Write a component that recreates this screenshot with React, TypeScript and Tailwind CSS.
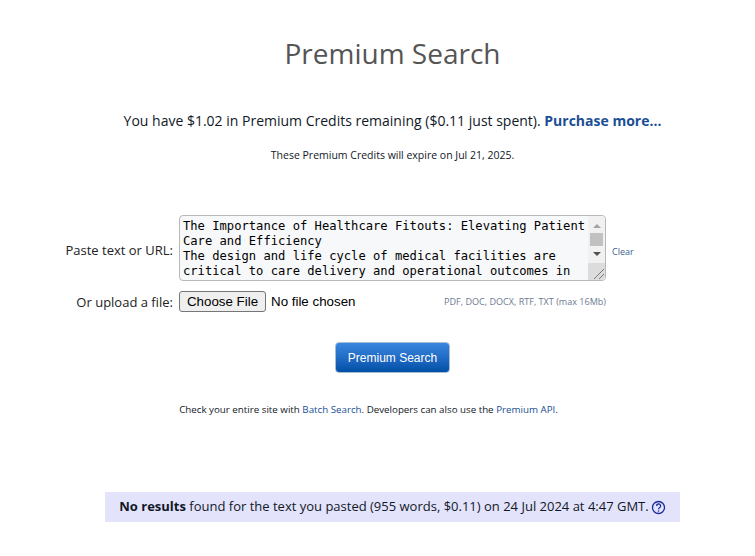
const text = `The Importance of Healthcare Fitouts: Elevating Patient Care and Efficiency
The design and life cycle of medical facilities are critical to care delivery and operational outcomes in modern healthcare settings. Well planned fitouts support patients, clinicians and administrators alike.`;

export default function App() {
  return (
    <div className="w-[755px] h-[556px] bg-white overflow-hidden font-['Open_Sans',sans-serif] text-[#111827]">
      <div className="ml-[105px] w-[575px] flex flex-col items-center">
        <h1 className="mt-[34px] h-[38px] text-[28px] leading-[38px] text-[#555555]">Premium Search</h1>
        <p className="mt-[39px] h-[20px] text-[14px] leading-[20px] whitespace-nowrap">
          You have $1.02 in Premium Credits remaining ($0.11 just spent).{" "}
          <a className="font-bold text-[#1a4f95]">Purchase more...</a>
        </p>
        <p className="mt-[16px] h-[16px] text-[10.5px] leading-[16px]">These Premium Credits will expire on Jul 21, 2025.</p>
      </div>

      <div className="mt-[52px] flex items-center">
        <label className="w-[173px] pt-[4px] text-right text-[13px] leading-[18px] text-[#222222]">Paste text or URL:</label>
        <div className="relative ml-[6px] w-[427px] h-[66px]">
          <textarea
            readOnly
            defaultValue={text}
            className="w-full h-full block border border-[#b8b8b8] rounded-[4px] bg-[#f7f8fa] pl-[3px] pr-[18px] py-[3px] overflow-hidden resize-none outline-none font-['DejaVu_Sans_Mono',monospace] text-[12.15px] leading-[15px] text-black"
          />
          <div className="absolute right-[1px] top-[1px] bottom-[1px] w-[17px] bg-[#f1f1f1] flex flex-col items-center rounded-r-[3px] overflow-hidden">
            <svg className="mt-[8px]" width="8" height="4" viewBox="0 0 8 4"><path d="M4 0 L8 4 H0 Z" fill="#a3a3a3" /></svg>
            <div className="mt-[5px] w-[13px] h-[13px] bg-[#c1c1c1]" />
            <svg className="mt-[6px]" width="8" height="4" viewBox="0 0 8 4"><path d="M0 0 H8 L4 4 Z" fill="#505050" /></svg>
            <div className="mt-auto w-[17px] h-[17px] bg-[#dcdcdc] flex items-end justify-end">
              <svg width="12" height="12" viewBox="0 0 12 12" stroke="#777777" strokeWidth="1"><path d="M1 11 L11 1 M6 11 L11 6" /></svg>
            </div>
          </div>
        </div>
        <a className="ml-[6px] pt-[8px] text-[9px] leading-[12px] text-[#3b5f8f]">Clear</a>
      </div>

      <div className="mt-[8px] flex items-center h-[24px]">
        <label className="w-[173px] pt-[2px] text-right text-[13px] leading-[18px] text-[#222222]">Or upload a file:</label>
        <input
          type="file"
          className="ml-[6px] w-[240px] font-['Liberation_Sans',sans-serif] text-[13.33px] text-black file:mr-[5px] file:h-[21px] file:w-[87px] file:rounded-[3px] file:border file:border-[#767676] file:bg-[#efefef] file:text-[13.33px] file:text-black"
        />
        <span className="w-[187px] pt-[2px] text-right text-[9.05px] leading-[12px] text-[#6b7a90]">PDF, DOC, DOCX, RTF, TXT (max 16Mb)</span>
      </div>

      <div className="ml-[105px] w-[575px] flex flex-col items-center">
        <button className="mt-[29px] w-[115px] h-[31px] rounded-[4px] border border-[#a8bcd4] bg-gradient-to-b from-[#3a87e0] to-[#0050a8] font-['Liberation_Sans',sans-serif] text-[12px] text-white">
          Premium Search
        </button>
        <p className="mt-[30px] mr-[48px] h-[14px] text-[9.75px] leading-[14px] whitespace-nowrap">
          Check your entire site with <a className="text-[#1a4f95]">Batch Search</a>. Developers can also use the <a className="text-[#1a4f95]">Premium API</a>.
        </p>
        <div className="mt-[75px] w-[575px] h-[30px] bg-[#e3e3fb] flex items-center justify-center text-[13px] whitespace-nowrap">
          <span><b className="font-bold">No results</b> found for the text you pasted (955 words, $0.11) on 24 Jul 2024 at 4:47 GMT.</span>
          <svg className="ml-[2px]" width="15" height="15" viewBox="0 0 15 15" fill="none" stroke="#1c2a9a" strokeWidth="1.3">
            <circle cx="7.5" cy="7.5" r="6" />
            <path d="M5.6 6a2 2 0 1 1 3 1.7c-.7.4-1.1.8-1.1 1.5" />
            <circle cx="7.5" cy="11" r=".8" fill="#1c2a9a" stroke="none" />
          </svg>
        </div>
      </div>
    </div>
  );
}
